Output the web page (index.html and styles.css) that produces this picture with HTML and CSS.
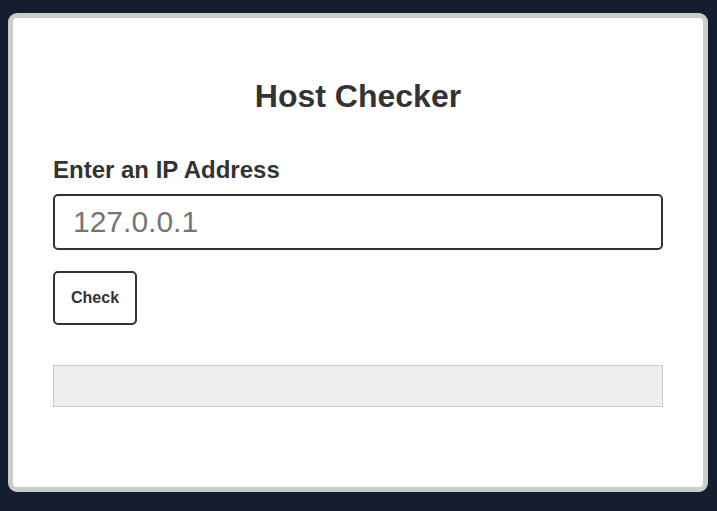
FILE: index.html
```html
<!DOCTYPE html>
<html lang="en">
<head>
<meta charset="utf-8">
<title>Host Checker</title>
<link rel="stylesheet" href="styles.css">
</head>
<body>
  <main class="card">
    <h1 class="title">Host Checker</h1>
    <label class="label" for="ip">Enter an IP Address</label>
    <input class="ip-input" id="ip" type="text" placeholder="127.0.0.1">
    <button class="check-btn" type="button">Check</button>
    <div class="result"></div>
  </main>
</body>
</html>
```

FILE: styles.css
```css
html, body {
  margin: 0;
  padding: 0;
}

body {
  background: #151e2f;
  font-family: "Liberation Sans", Arial, sans-serif;
  color: #333;
  padding-top: 13px;
}

.card {
  box-sizing: border-box;
  width: 700px;
  margin: 0 8px;
  background: #fff;
  border: 5px solid #ccc;
  border-radius: 9px;
  padding: 40px;
  display: flex;
  flex-direction: column;
  align-items: flex-start;
}

.title {
  align-self: stretch;
  margin: 20px 0 0;
  font-size: 32px;
  line-height: 37px;
  font-weight: bold;
  text-align: center;
  color: #333;
}

.label {
  margin-top: 41px;
  font-size: 24px;
  line-height: 28px;
  font-weight: bold;
  color: #333;
}

.ip-input {
  box-sizing: border-box;
  align-self: stretch;
  margin-top: 10px;
  height: 56px;
  border: 2px solid #333;
  border-radius: 5px;
  padding: 0 18px;
  font-family: "Liberation Sans", Arial, sans-serif;
  font-size: 30px;
  color: #333;
  background: #fff;
  outline: none;
}

.ip-input::placeholder {
  color: #757575;
}

.check-btn {
  box-sizing: border-box;
  margin-top: 21px;
  height: 54px;
  padding: 0 16px;
  border: 2px solid #333;
  border-radius: 5px;
  background: #fff;
  font-family: "Liberation Sans", Arial, sans-serif;
  font-size: 16px;
  font-weight: bold;
  color: #333;
}

.result {
  box-sizing: border-box;
  align-self: stretch;
  margin: 40px 0 40px;
  height: 42px;
  background: #eee;
  border: 1px solid #ccc;
}
```
